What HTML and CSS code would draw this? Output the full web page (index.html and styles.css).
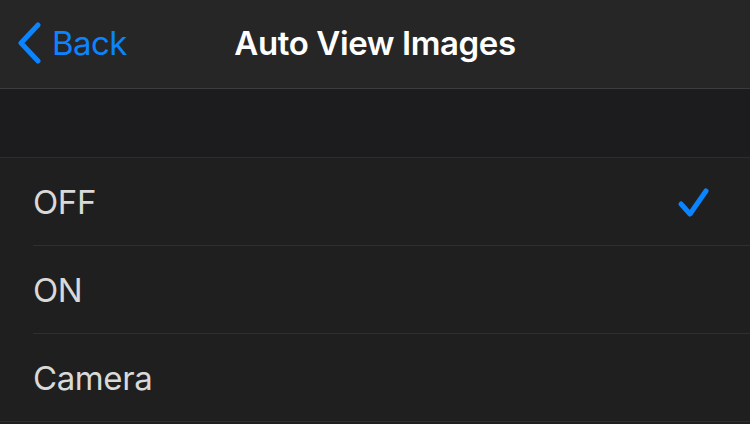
FILE: index.html
```html
<!DOCTYPE html>
<html lang="en">
  <head>
    <meta charset="UTF-8" />
    <meta name="viewport" content="width=device-width, initial-scale=1.0" />
    <title>Auto View Images</title>
    <link rel="stylesheet" href="styles.css">
  </head>
  <body>
    <!-- top navigation bar -->
    <header class="nav-bar">
      <a class="back-link" href="#">
        <svg class="chevron" width="26" height="42" viewBox="0 0 26 42">
          <path d="M22 3 L5 21 L22 39" fill="none" stroke="#0a84ff" stroke-width="5" stroke-linecap="round" stroke-linejoin="round" />
        </svg>
        <span>Back</span>
      </a>
      <h1 class="nav-title">Auto View Images</h1>
    </header>
    <!-- empty group header -->
    <div class="group-gap"></div>
    <!-- options list -->
    <div class="option-list">
      <div class="option-row">
        <span class="option-label">OFF</span>
        <svg class="check" width="36" height="34" viewBox="0 0 36 34">
          <path d="M5 18 L14 28 L30 5" fill="none" stroke="#0a84ff" stroke-width="5" stroke-linecap="round" stroke-linejoin="round" />
        </svg>
      </div>
      <div class="option-row">
        <span class="option-label">ON</span>
      </div>
      <div class="option-row last">
        <span class="option-label">Camera</span>
      </div>
    </div>
  </body>
</html>
```

FILE: styles.css
```css
/* reset */
* {
  margin: 0;
  padding: 0;
  box-sizing: border-box;
  font-family: "Inter", "Noto Sans", sans-serif;
}
body {
  background-color: #1f1f1f;
  width: 750px;
  height: 424px;
  overflow: hidden;
}
/* nav bar */
.nav-bar {
  position: relative;
  height: 89px;
  background-color: #262626;
  border-bottom: 1px solid #3c3c3c;
  display: flex;
  align-items: center;
  justify-content: center;
}
.back-link {
  position: absolute;
  left: 16px;
  top: 22px;
  display: flex;
  align-items: center;
  gap: 10px;
  color: #0a84ff;
  text-decoration: none;
  font-size: 33px;
  letter-spacing: -0.6px;
}
.nav-title {
  color: #ffffff;
  font-size: 33px;
  font-weight: 600;
  letter-spacing: -0.4px;
  margin-top: -2px;
}
/* spacing above the list */
.group-gap {
  height: 69px;
  background-color: #1c1c1e;
  border-bottom: 1px solid #2c2c2c;
}
/* list rows */
.option-list {
  border-bottom: 1px solid #2f2f2f;
}
.option-row {
  height: 88px;
  margin-left: 33px;
  display: flex;
  align-items: center;
  justify-content: space-between;
  padding-right: 38px;
  border-bottom: 1px solid #2f2f2f;
}
.option-row.last {
  height: 87px;
  border-bottom: none;
}
.option-label {
  color: #d9d9d9;
  font-size: 33px;
  letter-spacing: -0.4px;
}
.check {
  margin-top: 2px;
}
```
